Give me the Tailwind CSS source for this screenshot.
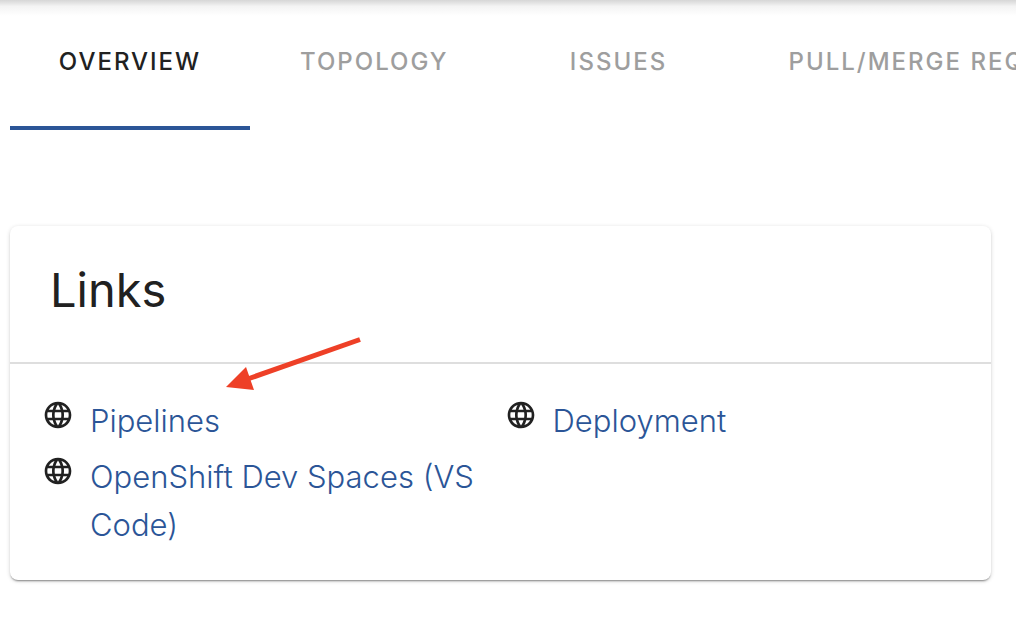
<!DOCTYPE html>
<html lang="en">
<head>
<meta charset="utf-8">
<meta name="viewport" content="width=device-width, initial-scale=1">
<title>Overview</title>
<script src="https://cdn.jsdelivr.net/npm/@tailwindcss/browser@4"></script>
</head>
<body class="min-h-screen overflow-x-hidden bg-white font-['Inter','Liberation_Sans',sans-serif] text-[#212121]">
<svg class="hidden" aria-hidden="true">
  <symbol id="globe" viewBox="0 0 24 24"><path d="M11.99 2C6.47 2 2 6.48 2 12s4.47 10 9.99 10C17.52 22 22 17.52 22 12S17.52 2 11.99 2zm6.93 6h-2.95c-.32-1.25-.78-2.45-1.38-3.56 1.84.63 3.37 1.91 4.33 3.56zM12 4.04c.83 1.2 1.48 2.53 1.91 3.96h-3.82c.43-1.43 1.08-2.76 1.91-3.96zM4.26 14C4.1 13.36 4 12.69 4 12s.1-1.36.26-2h3.38c-.08.66-.14 1.32-.14 2s.06 1.34.14 2H4.26zm.82 2h2.95c.32 1.25.78 2.45 1.38 3.56-1.84-.63-3.37-1.9-4.33-3.56zm2.95-8H5.08c.96-1.66 2.49-2.93 4.33-3.56C8.81 5.55 8.35 6.75 8.03 8zM12 19.96c-.83-1.2-1.48-2.53-1.91-3.96h3.82c-.43 1.43-1.08 2.76-1.91 3.96zM14.34 14H9.66c-.09-.66-.16-1.32-.16-2s.07-1.35.16-2h4.68c.09.65.16 1.32.16 2s-.07 1.34-.16 2zm.25 5.56c.6-1.11 1.06-2.31 1.38-3.56h2.95c-.96 1.65-2.49 2.93-4.33 3.56zM16.36 14c.08-.66.14-1.32.14-2s-.06-1.34-.14-2h3.38c.16.64.26 1.31.26 2s-.1 1.36-.26 2h-3.38z"/></symbol>
</svg>
<div class="h-4 bg-linear-to-b from-[#d6d6d6] via-[#f4f4f4] via-40% to-white"></div>
<nav class="flex overflow-hidden pl-2.5 text-2xl font-medium tracking-[2px] text-[#9e9e9e]" role="tablist" aria-label="Entity pages">
  <button role="tab" aria-selected="true" class="min-w-60 shrink-0 border-b-4 border-[#2b5597] pt-[30px] pb-12 text-[#212121]">OVERVIEW</button>
  <button role="tab" aria-selected="false" class="min-w-60 shrink-0 border-b-4 border-transparent px-[50px] pt-[30px] pb-12">TOPOLOGY</button>
  <button role="tab" aria-selected="false" class="min-w-60 shrink-0 border-b-4 border-transparent px-[50px] pt-[30px] pb-12">ISSUES</button>
  <button role="tab" aria-selected="false" class="min-w-60 shrink-0 border-b-4 border-transparent px-[50px] pt-[30px] pb-12">PULL/MERGE REQUESTS</button>
</nav>
<main class="pt-24 pr-[25px] pl-2.5">
  <section class="relative rounded-lg bg-white shadow-[0_2px_2px_-1px_rgba(0,0,0,0.42),0_1px_4px_rgba(0,0,0,0.16)]">
    <header class="border-b-2 border-[#dedede] px-10 pt-[34px] pb-[42px]">
      <h1 class="text-[47px] leading-[60px]">Links</h1>
    </header>
    <ul class="grid grid-cols-2 gap-y-2 pt-[33px] pr-6 pb-[31px] pl-8 text-[31px] leading-12 font-light text-[#2b5597]">
      <li class="flex gap-4 pr-6"><svg class="mt-0.5 size-8 shrink-0 fill-[#212121]" aria-hidden="true"><use href="#globe"/></svg><a href="#pipelines">Pipelines</a></li>
      <li class="flex gap-4 pr-6"><svg class="mt-0.5 size-8 shrink-0 fill-[#212121]" aria-hidden="true"><use href="#globe"/></svg><a href="#deployment">Deployment</a></li>
      <li class="flex gap-4 pr-6"><svg class="mt-0.5 size-8 shrink-0 fill-[#212121]" aria-hidden="true"><use href="#globe"/></svg><a href="#devspaces">OpenShift Dev Spaces (VS Code)</a></li>
    </ul>
    <svg class="pointer-events-none absolute top-[109px] left-[214px] h-[58px] w-[140px]" viewBox="224 335 140 58" aria-hidden="true"><path d="M360 339.500 249 378.500" stroke="#ee4027" stroke-width="5"/><path d="M226 387 246 367 254 390Z" fill="#ee4027"/></svg>
  </section>
</main>
</body>
</html>
